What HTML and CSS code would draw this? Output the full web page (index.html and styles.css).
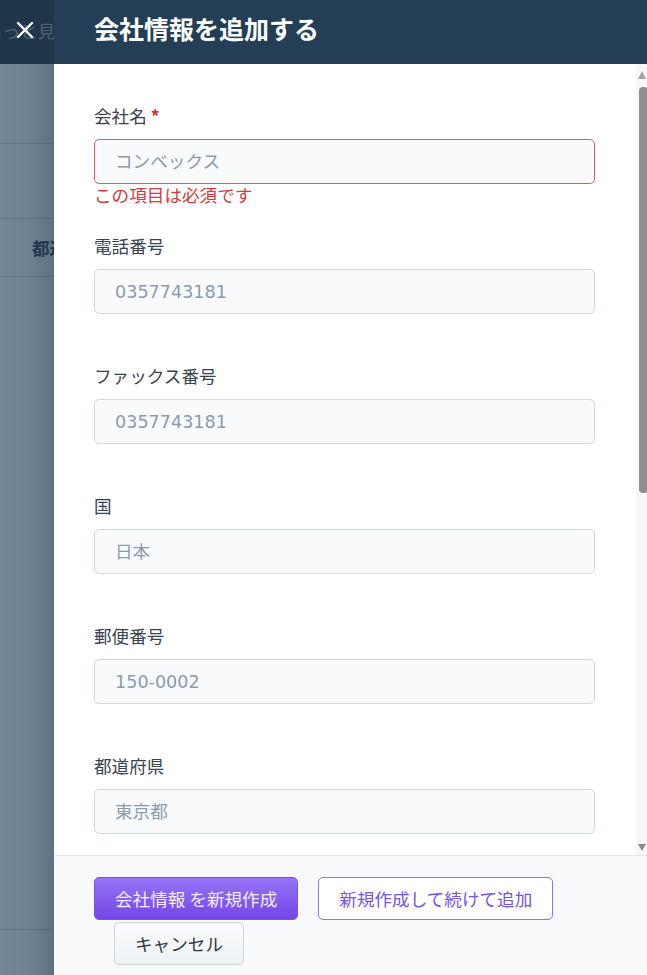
FILE: index.html
```html
<!DOCTYPE html>
<html lang="ja">
<head>
<meta charset="utf-8">
<title>会社情報を追加する</title>
<link rel="stylesheet" href="styles.css">
</head>
<body>
<div class="screen">
  <div class="backdrop">
    <div class="bd-top">
      <span class="bd-link">もっと見る</span>
      <button class="close" type="button" aria-label="閉じる">
        <svg width="18" height="16" viewBox="0 0 18 16"><path d="M2 1 L16 15 M16 1 L2 15" stroke="#ffffff" stroke-width="2.4" stroke-linecap="round" fill="none"/></svg>
      </button>
    </div>
    <div class="bd-row r1"></div>
    <div class="bd-row r2"></div>
    <div class="bd-row r3"><span class="bd-cell">都道府県</span></div>
    <div class="bd-row r4"></div>
    <div class="bd-row r5"></div>
  </div>

  <div class="panel">
    <header class="panel-header">
      <h1 class="panel-title">会社情報を追加する</h1>
    </header>

    <div class="panel-body">
      <form class="form">
        <div class="field has-error">
          <label class="label">会社名 <span class="req">*</span></label>
          <input class="input input-error" type="text" placeholder="コンベックス">
          <div class="error">この項目は必須です</div>
        </div>
        <div class="field">
          <label class="label">電話番号</label>
          <input class="input" type="text" placeholder="0357743181">
        </div>
        <div class="field">
          <label class="label">ファックス番号</label>
          <input class="input" type="text" placeholder="0357743181">
        </div>
        <div class="field">
          <label class="label">国</label>
          <input class="input" type="text" placeholder="日本">
        </div>
        <div class="field">
          <label class="label">郵便番号</label>
          <input class="input" type="text" placeholder="150-0002">
        </div>
        <div class="field">
          <label class="label">都道府県</label>
          <input class="input" type="text" placeholder="東京都">
        </div>
      </form>
      <div class="scrollbar">
        <span class="sb-up"></span>
        <span class="sb-thumb"></span>
        <span class="sb-down"></span>
      </div>
    </div>

    <footer class="panel-footer">
      <button class="btn btn-primary" type="button">会社情報 を新規作成</button>
      <button class="btn btn-outline" type="button">新規作成して続けて追加</button>
      <button class="btn btn-cancel" type="button">キャンセル</button>
    </footer>
  </div>
</div>
</body>
</html>
```

FILE: styles.css
```css
html, body {
  margin: 0;
  padding: 0;
}
body {
  width: 647px;
  height: 975px;
  overflow: hidden;
  font-family: "Noto Sans CJK JP", "Noto Sans", sans-serif;
}
.screen {
  display: flex;
  height: 975px;
}

/* backdrop (page behind the drawer) */
.backdrop {
  width: 54px;
  flex: none;
  overflow: hidden;
  display: flex;
  flex-direction: column;
  background: linear-gradient(to right, #738797 0, #6d818f 30px, #5e7282 54px);
}
.bd-top {
  height: 64px;
  flex: none;
  background: #1f3549;
  position: relative;
  display: flex;
  align-items: center;
  padding-bottom: 2px;
  box-sizing: border-box;
}
.bd-link {
  margin-left: -15px;
  white-space: nowrap;
  color: #4d6379;
  font-size: 17.6px;
  line-height: 1;
}
.close {
  position: absolute;
  left: 16px;
  top: 22px;
  width: 18px;
  height: 16px;
  padding: 0;
  border: 0;
  background: none;
  line-height: 0;
}
.bd-row {
  flex: none;
  border-bottom: 1px solid rgba(50, 70, 90, 0.28);
  box-sizing: border-box;
  display: flex;
  align-items: center;
}
.r1 { height: 80px; }
.r2 { height: 75px; }
.r3 { height: 58px; }
.r4 { height: 653px; }
.r5 { flex: 1; border-bottom: 0; }
.bd-cell {
  padding-left: 32px;
  white-space: nowrap;
  font-size: 17.6px;
  font-weight: 700;
  color: #22354a;
  line-height: 1;
}

/* drawer panel */
.panel {
  flex: 1;
  min-width: 0;
  display: flex;
  flex-direction: column;
  background: #ffffff;
}
.panel-header {
  height: 64px;
  flex: none;
  box-sizing: border-box;
  background: #243f55;
  padding: 0 40px 8px;
  display: flex;
  align-items: center;
}
.panel-title {
  margin: 0;
  font-size: 25px;
  font-weight: 700;
  color: #ffffff;
  line-height: 1;
}
.panel-body {
  flex: 1;
  min-height: 0;
  overflow: hidden;
  display: flex;
}
.form {
  flex: 1;
  margin: 0;
  padding: 41px 41px 0 40px;
}
.field {
  margin-bottom: 51px;
}
.field.has-error {
  margin-bottom: 29px;
}
.label {
  display: block;
  font-size: 17.6px;
  line-height: 22px;
  color: #3a424e;
  margin-bottom: 12px;
}
.req {
  color: #c93434;
  font-weight: 700;
}
.input {
  display: block;
  width: 100%;
  height: 45px;
  box-sizing: border-box;
  margin: 0;
  border: 1px solid #cfd9e3;
  border-radius: 5px;
  background: #f8fafc;
  padding: 0 20px;
  font-family: "DejaVu Sans", "Noto Sans CJK JP", sans-serif;
  font-size: 17.6px;
  color: #3a424e;
  outline: none;
}
.input::placeholder {
  color: #8c9bab;
  opacity: 1;
}
.input-error {
  border-color: #e05c5c;
}
.error {
  font-size: 17.6px;
  line-height: 22px;
  color: #d63a3a;
}

/* fake scrollbar */
.scrollbar {
  width: 11px;
  flex: none;
  background: #f7f7f7;
  display: flex;
  flex-direction: column;
  align-items: flex-start;
}
.sb-up {
  margin: 7px 0 0 2px;
  width: 0;
  height: 0;
  border-left: 4.5px solid transparent;
  border-right: 4.5px solid transparent;
  border-bottom: 8px solid #a3a3a3;
}
.sb-thumb {
  margin: 8px 0 0 3px;
  width: 9px;
  height: 406px;
  border-radius: 4px;
  background: #8e8e8e;
}
.sb-down {
  margin: auto 0 4px 2px;
  width: 0;
  height: 0;
  border-left: 4.5px solid transparent;
  border-right: 4.5px solid transparent;
  border-top: 7px solid #8a8a8a;
}

/* footer */
.panel-footer {
  height: 120px;
  flex: none;
  box-sizing: border-box;
  border-top: 1px solid #e2e7ec;
  background: #f7f9fb;
  padding: 21px 40px 0;
  display: flex;
  flex-wrap: wrap;
  align-content: flex-start;
  row-gap: 2px;
}
.btn {
  height: 43px;
  box-sizing: border-box;
  padding: 0 20px;
  border-radius: 5px;
  font-family: "Noto Sans CJK JP", sans-serif;
  font-size: 17.6px;
  line-height: 1;
  display: inline-flex;
  align-items: center;
  white-space: nowrap;
}
.btn + .btn {
  margin-left: 20px;
}
.btn-primary {
  border: 1px solid #7a52ea;
  background: linear-gradient(#9674f8, #7346e6);
  color: #f3edff;
}
.btn-outline {
  border: 1px solid #9272f0;
  background: #ffffff;
  color: #7753e6;
}
.btn-cancel {
  border: 1px solid #c9d4dc;
  background: linear-gradient(#fbfcfd, #edf2f5);
  color: #2e3742;
}
```
